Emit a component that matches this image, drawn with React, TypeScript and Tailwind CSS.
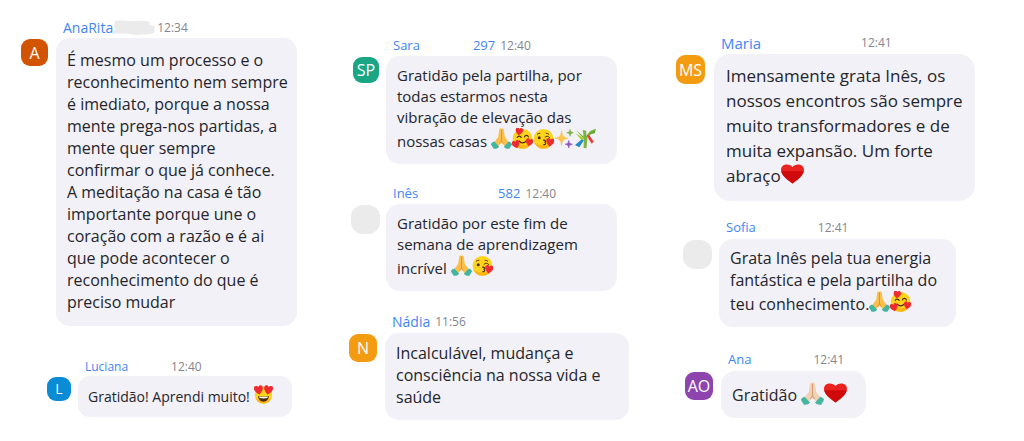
import type { ReactNode } from "react";
import clsx from "clsx";

type EmojiProps = { className: string };

function Hands({ className, skin, edge }: EmojiProps & { skin: string; edge: string }) {
  return (
    <svg viewBox="0 0 32 32" role="img" aria-label="mãos juntas" className={className}>
      <path d="M15.6 0.8c-1.6-.6-2.9.3-3.1 2L11 13.500 4.600 22l5 6.400 6.400-6z" fill={skin} />
      <path d="M16.400 0.8c1.600-.6 2.900.3 3.100 2L21 13.500 27.400 22l-5 6.400-6.400-6z" fill={skin} />
      <path d="M16 2v16.500c0 2-1.500 3.500-3 5M16 18.500c0 2 1.500 3.500 3 5" fill="none" stroke={edge} strokeWidth="1.500" />
      <path d="M5 20.500c-2.500.5-4.800 2.200-5 4.500l4 6.500c3.500.6 6.800-.6 8.500-3z" fill="#43b5a0" />
      <path d="M27 20.500c2.500.5 4.800 2.200 5 4.500l-4 6.500c-3.500.6-6.800-.6-8.500-3z" fill="#43b5a0" />
    </svg>
  );
}

function Pray({ className }: EmojiProps) {
  return <Hands className={className} skin="#fbc04b" edge="#e0912f" />;
}

function PrayLight({ className }: EmojiProps) {
  return <Hands className={className} skin="#f3d2b4" edge="#cf9c7e" />;
}

const HEART = "M0 5C-7 0-5.500-5-2.600-5-1.200-5-.3-4.200 0-3.200.3-4.200 1.200-5 2.600-5 5.500-5 7 0 0 5z";

function Adoring({ className }: EmojiProps) {
  return (
    <svg viewBox="0 0 32 32" role="img" aria-label="rosto com corações" className={className}>
      <circle cx="16" cy="16.500" r="15" fill="#fdd31b" />
      <path d="M2 22a15 15 0 0 0 28 0c-7 6-21 6-28 0z" fill="#fbb515" />
      <path d="M8 14.500c1-3 5-3 6 0M19 13.500c1-3 5-3 6 0" fill="none" stroke="#4b2d12" strokeWidth="1.800" strokeLinecap="round" />
      <path d="M11 20c2 3.500 8 3.500 10.500 0" fill="none" stroke="#4b2d12" strokeWidth="1.800" strokeLinecap="round" />
      <path d={HEART} transform="translate(11 5.500) rotate(8) scale(1.150)" fill="#ef2b2f" />
      <path d={HEART} transform="translate(6 25) rotate(-15) scale(1.200)" fill="#ef2b2f" />
      <path d={HEART} transform="translate(26.500 22) rotate(12) scale(1.150)" fill="#ef2b2f" />
    </svg>
  );
}

function Kiss({ className }: EmojiProps) {
  return (
    <svg viewBox="0 0 32 32" role="img" aria-label="rosto a mandar beijo" className={className}>
      <circle cx="16" cy="16.500" r="15" fill="#fdd31b" />
      <path d="M2 22a15 15 0 0 0 28 0c-7 6-21 6-28 0z" fill="#fbb515" />
      <circle cx="9.500" cy="15" r="2.300" fill="#4b2d12" />
      <path d="M6.500 9.500c1-1 2.500-1.500 4-1.500M18.500 14c2-2 5-2 7 .5M20 8c1.500 0 3 .5 4 1.500" fill="none" stroke="#4b2d12" strokeWidth="1.500" strokeLinecap="round" />
      <path d="M16 18.500c4-.5 4 3 1.500 3.300 3 .3 2.500 4-1 3.500" fill="none" stroke="#4b2d12" strokeWidth="1.700" strokeLinecap="round" />
      <path d={HEART} transform="translate(26 22) rotate(10) scale(1.250)" fill="#ef2b2f" />
    </svg>
  );
}

function Sparkles({ className }: EmojiProps) {
  return (
    <svg viewBox="0 0 32 32" role="img" aria-label="brilhos" className={className}>
      <path d="M11.500 4c1 8 2.500 10 10 11.500-7.500 1.500-9 3.500-10 11.500-1-8-2.500-10-10-11.500 7.500-1.500 9-3.500 10-11.500z" fill="#fcc550" stroke="#fcc550" />
      <path d="M24.500 2c.6 3.500 1.500 4.500 5 5.200-3.500.7-4.400 1.700-5 5.300-.6-3.600-1.500-4.600-5-5.300 3.500-.7 4.400-1.700 5-5.200z" fill="#7cb342" stroke="#7cb342" />
      <path d="M22.500 19c.7 4 1.700 5 5.500 5.700-3.800.8-4.800 1.800-5.500 5.800-.7-4-1.700-5-5.500-5.800 3.800-.7 4.800-1.700 5.500-5.700z" fill="#9256c4" stroke="#9256c4" />
    </svg>
  );
}

function Bamboo({ className }: EmojiProps) {
  return (
    <svg viewBox="0 0 32 32" role="img" aria-label="árvore tanabata" className={className}>
      <path d="M2 3l11 10L12 3l5 1 .5 8 5-7L31 1l-5 7-7 6.500L17.500 31l-4.500-.5.500-13z" fill="#7cb342" />
      <path d="M1 8l11 6.500 2 2.500-5 1z" fill="#aed136" />
      <path d="M20 10l7.500-5L32 1l-2 7z" fill="#5fa52e" />
      <path d="M10.500 17l3 1.500L6.500 29.500 0 26z" fill="#1e88d0" />
      <path d="M18 10l4 1.500 6.500 9-3 3.500-4.500-7z" fill="#ee3b36" />
    </svg>
  );
}

function HeartEyes({ className }: EmojiProps) {
  return (
    <svg viewBox="0 0 32 32" role="img" aria-label="rosto apaixonado" className={className}>
      <circle cx="16" cy="17" r="14.500" fill="#fdd31b" />
      <path d="M2.500 22a14.500 14.500 0 0 0 27 0c-7 5-20 5-27 0z" fill="#fbb515" />
      <path d="M7 18.500c5 1.500 13 1.500 18 0 0 5.500-4 9.500-9 9.500s-9-4-9-9.500z" fill="#4b2d12" />
      <path d="M8.500 19.500c4.500 1 10.500 1 15 0l-.8 2.500c-4 .8-9.400.8-13.400 0z" fill="#fff" />
      <path d={HEART} transform="translate(8 8.500) rotate(-10) scale(1.500)" fill="#ef2b2f" />
      <path d={HEART} transform="translate(24 8.500) rotate(10) scale(1.500)" fill="#ef2b2f" />
    </svg>
  );
}

function RedHeart({ className }: EmojiProps) {
  return (
    <svg viewBox="0 0 32 32" role="img" aria-label="coração" className={className}>
      <path d="M16 28.500C6 21.500 0 15.500 0 9.500 0 5 3.300 2 7.800 2 11.500 2 14.500 3.800 16 5.500c1.500-1.700 4.500-3.500 8.200-3.500C28.700 2 32 5 32 9.500c0 6-6 12-16 19z" fill="#e92320" />
      <path d="M.3 11.500h31.400C30.500 17 25 22.200 16 28.500 7 22.200 1.500 17 .3 11.500z" fill="#d00a0a" />
    </svg>
  );
}

function Smudge() {
  return (
    <svg viewBox="0 0 42 16" className="h-4 w-[42px]" aria-hidden="true">
      <path d="M2 1c6-1 12 0 18 0s12-1 17 1l-1 3 6 1-1 7c-5 2-12 1-17 2-6-1-13-2-23-1L0 12l3-3-2-3z" fill="#ebebeb" />
    </svg>
  );
}

const e19 = "ml-1 inline-block size-[19px] align-[-2px]";
const e21 = "inline-block size-[21px] align-[-2px]";
const e23 = "inline-block size-[23px] align-[-4px]";

type MessageProps = {
  name: string;
  digits?: string;
  time: string;
  initials?: string;
  place: string;
  avatar: string;
  header: string;
  gap: string;
  smudged?: boolean;
  bubble: string;
  children: ReactNode;
};

function Message({ name, digits, time, initials, place, avatar, header, gap, smudged, bubble, children }: MessageProps) {
  return (
    <article className={clsx("grid grid-cols-[auto_1fr] items-start", place)}>
      <header className={clsx("col-start-2 flex items-center whitespace-nowrap pl-[7px]", header)}>
        <span className="text-[#3f86f7]">{name}</span>
        <span className={clsx("shrink-0", gap)} aria-hidden="true">{smudged && <Smudge />}</span>
        {digits && <span className="mr-[5px] text-[#3f86f7]">{digits}</span>}
        <time className="text-xs text-[#85858f]">{time}</time>
      </header>
      <div className={clsx("mt-px flex items-center justify-center text-white", avatar)}>{initials}</div>
      <div className={clsx("w-full whitespace-nowrap bg-[#f1f1f7] text-[#25252b]", bubble)}>{children}</div>
    </article>
  );
}

export default function App() {
  return (
    <main className="grid grid-cols-[328fr_327fr_369fr] bg-white pb-6 font-['Open_Sans','Noto_Sans',sans-serif]">
      <section className="flex flex-col gap-8 pl-5 pt-[18px]">
        <Message
          name="AnaRita" time="12:34" initials="A" place="ml-px"
          avatar="mr-2 size-[27px] rounded-[9px] bg-[#d35400] text-base"
          header="h-5 text-sm"
          gap="w-11"
          smudged
          bubble="max-w-[241px] rounded-[14px] px-[11px] pb-[13px] pt-[11px] text-base leading-[22px]"
        >
          É mesmo um processo e o<br />
          reconhecimento nem sempre<br />
          é imediato, porque a nossa<br />
          mente prega-nos partidas, a<br />
          mente quer sempre<br />
          confirmar o que já conhece.<br />
          A meditação na casa é tão<br />
          importante porque une o<br />
          coração com a razão e é ai<br />
          que pode acontecer o<br />
          reconhecimento do que é<br />
          preciso mudar
        </Message>
        <Message
          name="Luciana" time="12:40" initials="L" place="ml-[27px]"
          avatar="mr-[7px] size-6 rounded-[9px] bg-[#0a8bd6] text-sm"
          header="h-[18px] text-xs"
          gap="w-[43px]"
          bubble="max-w-[214px] rounded-xl px-2.5 pb-2.5 pt-[9px] text-sm leading-5"
        >
          Gratidão! Aprendi muito!<HeartEyes className={e19} />
        </Message>
      </section>

      <section className="flex flex-col gap-5 pl-5 pt-9">
        <Message
          name="Sara" digits="297" time="12:40" initials="SP" place="ml-[5px]"
          avatar="mr-[7px] size-[26px] rounded-[9px] bg-[#1aa585] text-base"
          header="h-5 text-[13px]"
          gap="w-[53px]"
          bubble="max-w-[231px] rounded-[14px] px-[11px] pb-3 pt-[9px] text-[15px] leading-[21px]"
        >
          Gratidão pela partilha, por<br />
          todas estarmos nesta<br />
          vibração de elevação das<br />
          nossas casas <Pray className={e21} /><Adoring className={e21} /><Kiss className={e21} /><Sparkles className={e21} /><Bamboo className={e21} />
        </Message>
        <Message
          name="Inês" digits="582" time="12:40" place="ml-[3px]"
          avatar="mr-1.5 size-[29px] rounded-xl bg-[#ebebeb]"
          header="h-5 text-[13px]"
          gap="w-20"
          bubble="max-w-[231px] rounded-[14px] px-[11px] pb-3 pt-[9px] text-[15px] leading-[21px]"
        >
          Gratidão por este fim de<br />
          semana de aprendizagem<br />
          incrível <Pray className={e21} /><Kiss className={e21} />
        </Message>
        <Message
          name="Nádia" time="11:56" initials="N" place="ml-px"
          avatar="mr-2 size-7 rounded-[9px] bg-[#f39c12] text-base"
          header="h-[22px] text-sm"
          gap="w-[5px]"
          bubble="max-w-[244px] rounded-[14px] px-[11px] pb-3 pt-[9px] text-base leading-[22px]"
        >
          Incalculável, mudança e<br />
          consciência na nossa vida e<br />
          saúde
        </Message>
      </section>

      <section className="flex flex-col pl-5 pt-8">
        <Message
          name="Maria" time="12:41" initials="MS" place="ml-px"
          avatar="mr-[9px] size-[29px] rounded-[9px] bg-[#f39c12] text-base"
          header="h-[22px] text-[15px]"
          gap="w-[100px]"
          bubble="max-w-[261px] rounded-2xl px-3 pb-[13px] pt-[9px] text-[17px] leading-[25px]"
        >
          Imensamente grata Inês, os<br />
          nossos encontros são sempre<br />
          muito transformadores e de<br />
          muita expansão. Um forte<br />
          abraço<RedHeart className={e23} />
        </Message>
        <Message
          name="Sofia" time="12:41" place="ml-2 mt-4"
          avatar="mr-[7px] size-[29px] rounded-xl bg-[#ebebeb]"
          header="h-[22px] text-[13px]"
          gap="w-[62px]"
          bubble="max-w-[237px] rounded-[14px] px-[11px] pb-3 pt-2 text-base leading-[22px]"
        >
          Grata Inês pela tua energia<br />
          fantástica e pela partilha do<br />
          teu conhecimento.<Pray className={e21} /><Adoring className={e21} />
        </Message>
        <Message
          name="Ana" time="12:41" initials="AO" place="ml-2.5 mt-[22px]"
          avatar="mr-2 size-7 rounded-[9px] bg-[#8e44ad] text-base"
          header="h-[22px] text-[13px]"
          gap="w-[62px]"
          bubble="max-w-[145px] rounded-[14px] px-[11px] pb-3 pt-[11px] text-base leading-[22px]"
        >
          Gratidão <PrayLight className={e23} /><RedHeart className={e23} />
        </Message>
      </section>
    </main>
  );
}
